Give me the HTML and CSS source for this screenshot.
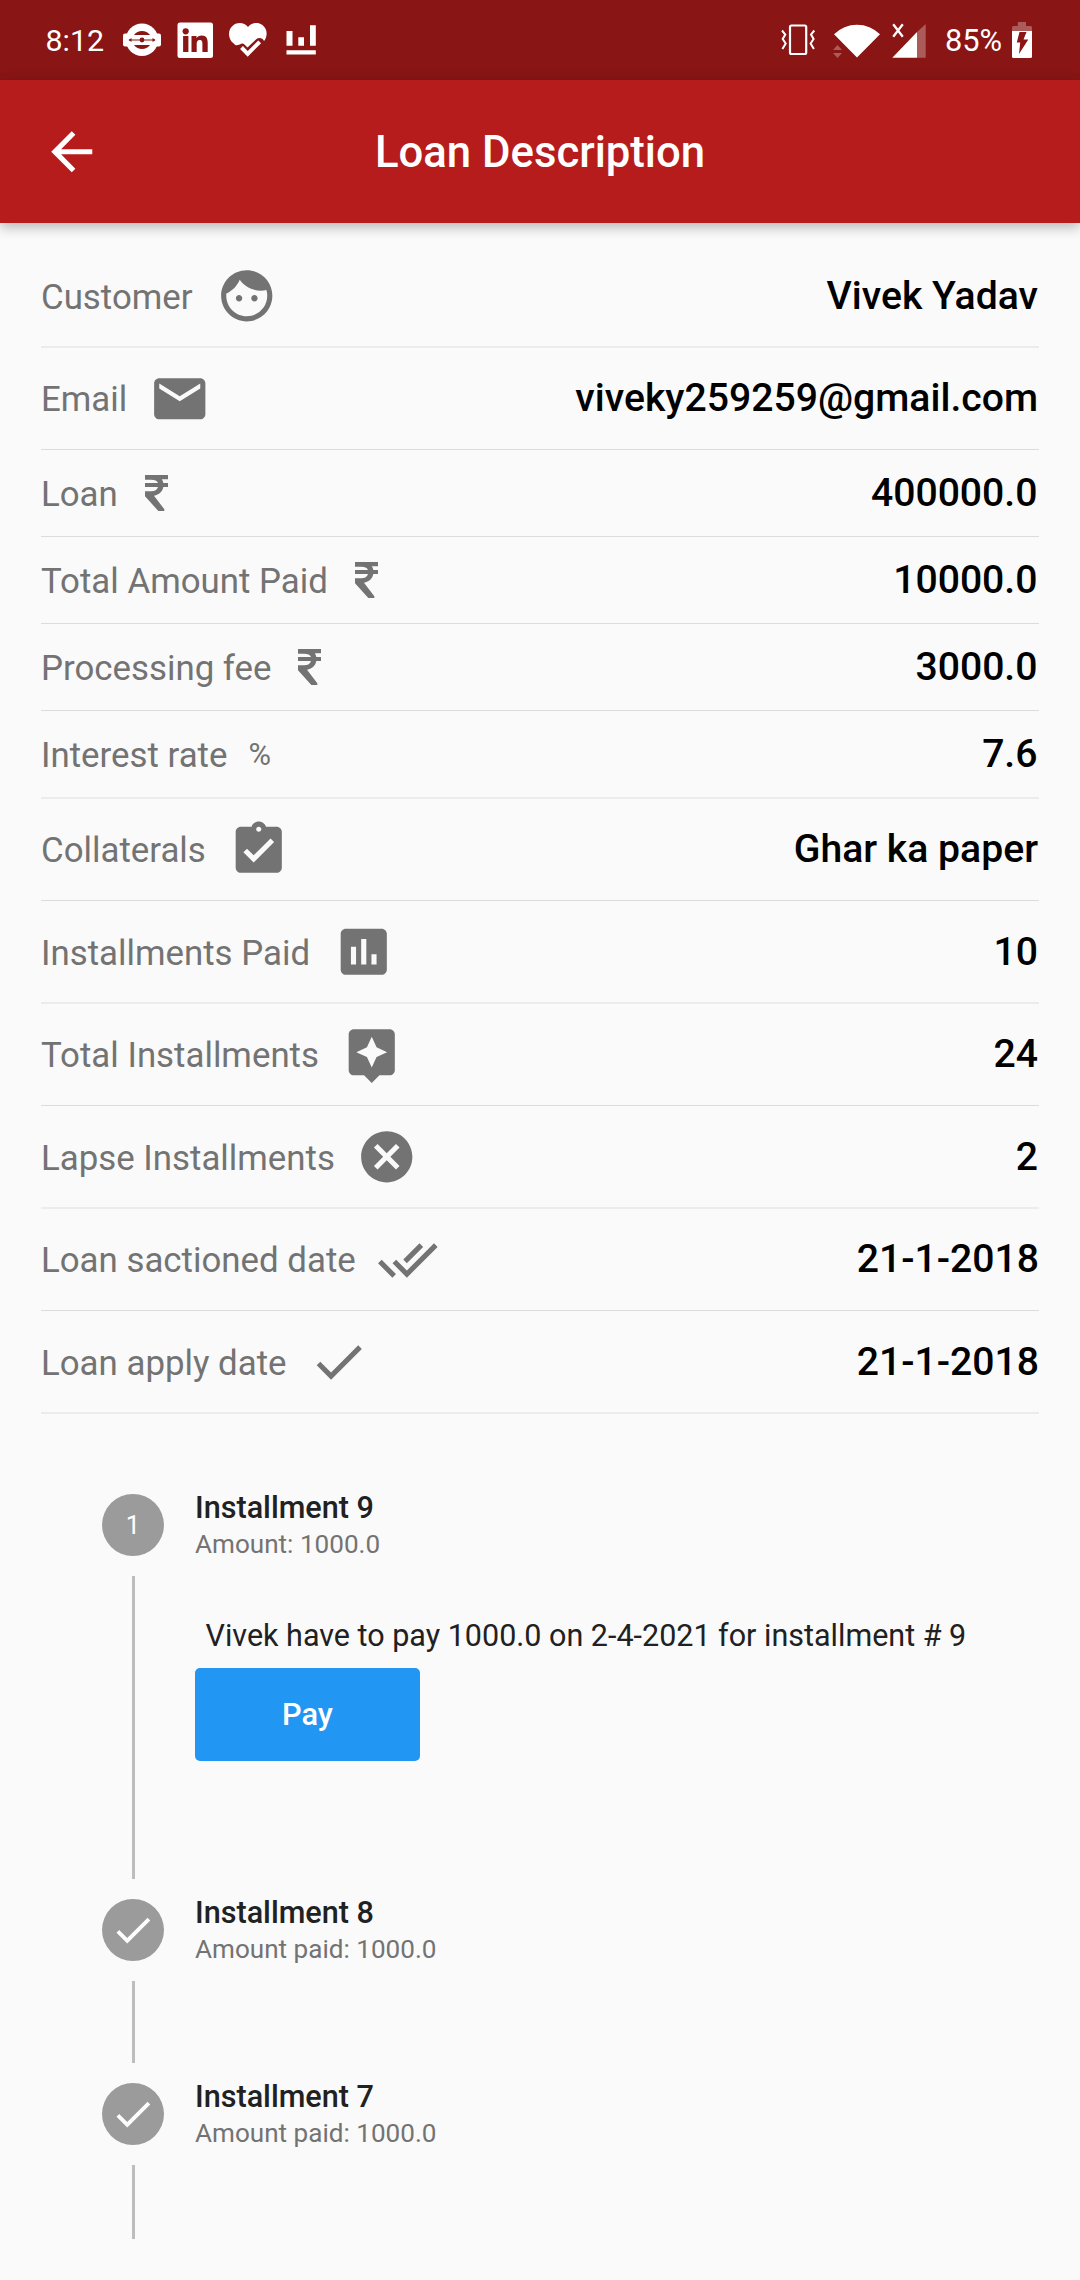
FILE: index.html
```html
<!DOCTYPE html>
<html lang="en">
<head>
<meta charset="utf-8">
<title>Loan Description</title>
<link rel="stylesheet" href="styles.css">
</head>
<body>
<div class="status">
  <span class="time">8:12</span>
  <svg class="s-train" width="38" height="80" viewBox="123 0 38 80"><circle cx="142" cy="39.7" r="16.2" fill="#fff"/><rect x="123" y="33.5" width="38" height="13" rx="2" fill="#fff"/><path d="M134 35a10 10 0 0 1 16 0zM134 45a10 10 0 0 0 16 0z" fill="#891515"/><path d="M129 40h26" stroke="#891515" stroke-width="1"/><circle cx="142" cy="40" r="2.4" fill="#891515"/><path d="M128.500 40l3-2v4zM155.500 40l-3-2v4z" fill="#891515"/></svg>
  <svg class="s-in" width="36" height="80" viewBox="177 0 36 80"><rect x="177.500" y="22.500" width="35.500" height="35.500" rx="2.500" fill="#fff"/><g fill="#891515"><circle cx="185.700" cy="31.300" r="3.100"/><rect x="183.100" y="36" width="5.300" height="16"/><path d="M191.500 36h5v2.200c1-1.600 2.800-2.600 5.200-2.600 4.700 0 6 3 6 7.500V52h-5.300v-8c0-2-.2-3.900-2.700-3.900-2.400 0-3 1.800-3 3.800V52h-5.200z"/></g></svg>
  <svg class="s-heart" width="38" height="80" viewBox="229 0 38 80"><path d="M248 27c-3.500-4.600-10.500-5.200-15-1.500-5 4-5 11-1.500 16L248 57l16-15.500c3.500-5 4-12-1.500-16.500-4.500-3.300-11-2.500-14.500 2z" fill="#fff"/><path d="M233 46l7-1.500a3 3 0 0 1 4.500 0l3 3 9-8.500c2.500-2 6.500-1 7.500 2l4-2v20h-35z" fill="#891515"/><path d="M241.500 47.500l6.200 6.300 12-12" fill="none" stroke="#fff" stroke-width="4"/></svg>
  <svg class="s-bars" width="30" height="80" viewBox="286 0 30 80"><path d="M286.500 31h6v14.700h-6zM298.300 37.300h5.700v8.400h-5.700zM310 25.300h5.800v20.400H310zM286.500 50.300h29.300v4.200h-29.300z" fill="#fff"/></svg>
  <div class="status-right">
    <svg class="s-vib" width="35" height="80" viewBox="781 0 35 80" fill="none" stroke="#fff"><rect x="790" y="25.500" width="16.200" height="28.500" rx="1.500" stroke-width="2.200"/><path d="M782 30.500l3.300 4-2.600 4.500 3 4.500-3.300 5.500M814.300 30.500l-3.300 4 2.600 4.500-3 4.500 3.300 5.500" stroke-width="2"/></svg>
    <svg class="s-wifi" width="48" height="80" viewBox="833 0 48 80"><path d="M834 34.300a32.500 32.500 0 0 1 46 0L857 57.500z" fill="#fff"/><path d="M833 50l4.500-5 4.500 5zM833 53h9l-4.500 5z" fill="#fff" opacity=".3"/></svg>
    <svg class="s-cell" width="35" height="80" viewBox="892 0 35 80"><path d="M892.300 57.700L917 32v25.700z" fill="#fff"/><path d="M917 32l8.700-8v33.700H917z" fill="#fff" opacity=".3"/><path d="M893.200 24.300l9.600 12.400M902.800 24.300l-9.600 12.400" stroke="#fff" stroke-width="2.300"/></svg>
    <span class="battery-text">85%</span>
    <svg class="s-bat" width="20" height="80" viewBox="1012 0 20 80"><path d="M1012 31v-3.500q0-1.500 1.500-1.500h4.300v-4h8.200v4h4.500q1.500 0 1.500 1.500V31z" fill="#fff" opacity=".3"/><path d="M1012 31h20v25.500q0 1.500-1.500 1.500h-17q-1.500 0-1.500-1.500z" fill="#fff"/><path d="M1019.500 32h7l-3 7.500h4.800l-9.300 14.500 1.200-11.500h-3.400z" fill="#891515"/></svg>
  </div>
</div>
<header class="appbar">
  <svg class="icon back" viewBox="0 0 24 24"><path d="M20 11H7.830l5.590-5.590L12 4l-8 8 8 8 1.410-1.410L7.830 13H20v-2z"/></svg>
  <h1>Loan Description</h1>
</header>
<main>
<section class="details">
  <div class="row soft"><span class="label wide">Customer</span><svg class="icon" viewBox="0 0 24 24"><path d="M9 11.750c-.69 0-1.250.56-1.250 1.250s.56 1.250 1.250 1.250 1.250-.56 1.250-1.250-.56-1.250-1.250-1.250zm6 0c-.69 0-1.250.56-1.250 1.250s.56 1.250 1.250 1.250 1.250-.56 1.250-1.250-.56-1.250-1.250-1.250zM12 2C6.480 2 2 6.480 2 12s4.480 10 10 10 10-4.480 10-10S17.520 2 12 2zm0 18c-4.410 0-8-3.590-8-8 0-.29.020-.58.050-.86 2.360-1.050 4.230-2.980 5.210-5.370C11.070 8.330 14.050 10 17.420 10c.78 0 1.530-.09 2.250-.26.21.71.33 1.470.33 2.260 0 4.410-3.590 8-8 8z"/></svg><span class="value">Vivek Yadav</span></div>
  <div class="row"><span class="label mid">Email</span><svg class="icon" viewBox="0 0 24 24"><path d="M20 4H4c-1.100 0-1.990.9-1.990 2L2 18c0 1.100.9 2 2 2h16c1.100 0 2-.9 2-2V6c0-1.100-.9-2-2-2zm0 4l-8 5-8-5V6l8 5 8-5v2z"/></svg><span class="value">viveky259259@gmail.com</span></div>
  <div class="row short"><span class="label">Loan</span><svg class="rupee" viewBox="15 27 69 108"><path d="M15 27H84V40H65C68 43 69 47 70 51H84V63H70C67 77 58 86 42 89L73 130V135H55L15 91V76H33C45 76 52 71 54 63H15V51H54C51 44 45 41 33 41H15Z"/></svg><span class="value">400000.0</span></div>
  <div class="row short"><span class="label">Total Amount Paid</span><svg class="rupee" viewBox="15 27 69 108"><path d="M15 27H84V40H65C68 43 69 47 70 51H84V63H70C67 77 58 86 42 89L73 130V135H55L15 91V76H33C45 76 52 71 54 63H15V51H54C51 44 45 41 33 41H15Z"/></svg><span class="value">10000.0</span></div>
  <div class="row short"><span class="label">Processing fee</span><svg class="rupee" viewBox="15 27 69 108"><path d="M15 27H84V40H65C68 43 69 47 70 51H84V63H70C67 77 58 86 42 89L73 130V135H55L15 91V76H33C45 76 52 71 54 63H15V51H54C51 44 45 41 33 41H15Z"/></svg><span class="value">3000.0</span></div>
  <div class="row short soft"><span class="label">Interest rate</span><span class="percent">%</span><span class="value">7.6</span></div>
  <div class="row"><span class="label mid">Collaterals</span><svg class="icon" viewBox="0 0 24 24"><path d="M19 3h-4.180C14.400 1.840 13.300 1 12 1c-1.300 0-2.400.84-2.820 2H5c-1.100 0-2 .9-2 2v14c0 1.100.9 2 2 2h14c1.100 0 2-.9 2-2V5c0-1.100-.9-2-2-2zm-7 0c.55 0 1 .45 1 1s-.45 1-1 1-1-.45-1-1 .45-1 1-1zm-2 14l-4-4 1.410-1.410L10 14.170l6.590-6.590L18 9l-8 8z"/></svg><span class="value">Ghar ka paper</span></div>
  <div class="row soft"><span class="label wide">Installments Paid</span><svg class="icon" viewBox="0 0 24 24"><path d="M19 3H5c-1.100 0-2 .9-2 2v14c0 1.100.9 2 2 2h14c1.100 0 2-.9 2-2V5c0-1.100-.9-2-2-2zM9 17H7v-7h2v7zm4 0h-2V7h2v10zm4 0h-2v-4h2v4z"/></svg><span class="value">10</span></div>
  <div class="row"><span class="label mid">Total Installments</span><svg class="icon" viewBox="0 0 24 24"><path d="M19 2H5c-1.100 0-2 .9-2 2v14c0 1.100.9 2 2 2h4l3 3 3-3h4c1.100 0 2-.9 2-2V4c0-1.100-.9-2-2-2zm-5.120 10.880L12 17l-1.880-4.120L6 11l4.120-1.880L12 5l1.880 4.120L18 11l-4.120 1.880z"/></svg><span class="value">24</span></div>
  <div class="row soft"><span class="label">Lapse Installments</span><svg class="icon" viewBox="0 0 24 24"><path d="M12 2C6.470 2 2 6.470 2 12s4.470 10 10 10 10-4.470 10-10S17.530 2 12 2zm5 13.590L15.590 17 12 13.410 8.410 17 7 15.590 10.590 12 7 8.410 8.410 7 12 10.590 15.590 7 17 8.410 13.410 12 17 15.590z"/></svg><span class="value">2</span></div>
  <div class="row"><span class="label">Loan sactioned date</span><svg class="icon" viewBox="0 0 24 24"><path d="M18 7l-1.410-1.410-6.340 6.340 1.410 1.410L18 7zm4.240-1.410L11.660 16.170 7.480 12l-1.410 1.410L11.660 19l12-12-1.420-1.410zM.41 13.410L6 19l1.410-1.410L1.830 12 .41 13.410z"/></svg><span class="value date">21-1-2018</span></div>
  <div class="row soft"><span class="label">Loan apply date</span><svg class="icon" viewBox="0 0 24 24"><path d="M9 16.200L4.800 12l-1.400 1.400L9 19 21 7l-1.400-1.400L9 16.200z"/></svg><span class="value date">21-1-2018</span></div>
</section>
<section class="stepper">
  <div class="step current">
    <div class="dot">1</div>
    <div class="heading"><b>Installment 9</b><span>Amount: 1000.0</span></div>
    <div class="rail"></div>
    <div class="content"><p>Vivek have to pay 1000.0 on 2-4-2021 for installment # 9</p><button type="button">Pay</button></div>
  </div>
  <div class="step">
    <div class="dot"><svg viewBox="0 0 24 24"><path d="M9 16.200L4.800 12l-1.400 1.400L9 19 21 7l-1.400-1.400L9 16.200z"/></svg></div>
    <div class="heading"><b>Installment 8</b><span>Amount paid: 1000.0</span></div>
    <div class="rail"></div>
  </div>
  <div class="step last">
    <div class="dot"><svg viewBox="0 0 24 24"><path d="M9 16.200L4.800 12l-1.400 1.400L9 19 21 7l-1.400-1.400L9 16.200z"/></svg></div>
    <div class="heading"><b>Installment 7</b><span>Amount paid: 1000.0</span></div>
    <div class="rail"></div>
  </div>
</section>
</main>
</body>
</html>
```
FILE: styles.css
```css
* { box-sizing: border-box; }
body { margin: 0; width: 1080px; height: 2280px; overflow: hidden; background: #fafafa; color: #212121; font-family: Roboto, "Noto Sans", sans-serif; }
svg { display: block; flex: none; }

/* System status bar */
.status { height: 80px; display: flex; align-items: center; padding: 0 48px 0 45.5px; background: #891515; color: #fff; font-size: 30.4px; line-height: 36px; }
.time { width: 77.5px; padding-top: 1px; }
.s-in { margin-left: 16px; }
.s-heart { margin-left: 16px; }
.s-bars { margin-left: 19px; }
.status-right { display: flex; align-items: center; margin-left: auto; }
.s-wifi { margin-left: 17px; }
.s-cell { margin-left: 11px; }
.battery-text { width: 85px; padding: 2px 0 0 18px; font-size: 30.8px; }

/* App bar */
.appbar { position: relative; height: 143px; display: grid; grid-template-columns: 62px 1fr 62px; align-items: center; padding: 0 41px; background: #b71c1c; color: #fff; box-shadow: 0 4px 12px rgba(0, 0, 0, .28); }
.appbar h1 { margin: 0; text-align: center; font-size: 43.7px; line-height: 52px; font-weight: 500; }
.icon { width: 61.5px; height: 61.5px; fill: #737373; }
.appbar .back { fill: #fff; }

/* Loan details */
.details { padding: 22px 41px 0; }
.row { display: flex; align-items: center; height: 102px; border-bottom: 1px solid #dcdcdc; }
.row.short { height: 87px; }
.row.soft { height: 103px; border-bottom: 2px solid #ececec; }
.row.short.soft { height: 88px; }
.label { margin-right: 21px; padding-top: 3px; font-size: 34.85px; line-height: 41px; color: #737373; white-space: nowrap; }
.label.mid { margin-right: 22px; }
.label.wide { margin-right: 23px; }
.rupee { width: 23px; height: 36px; margin-left: 6px; fill: #737373; }
.percent { font-size: 30.76px; line-height: 37px; color: #737373; }
.value { margin-left: auto; padding-right: 1px; font-size: 39.15px; line-height: 46px; font-weight: 500; color: #000; }
.value.date { padding-right: 0; }
.row.short .value { padding-right: 1.5px; }
.row:not(.soft):not(.short) .label { padding-top: 1px; }
.row:not(.soft):not(.short) .value { padding-bottom: 2px; }

/* Installment stepper */
.stepper { padding: 80px 102px 0; }
.step { display: grid; grid-template: 62px 1fr / 62px 1fr; column-gap: 31px; height: 184px; }
.step.current { height: 405px; }
.step.last { height: 176px; }
.dot { display: flex; align-items: center; justify-content: center; border-radius: 50%; background: #9b9b9b; color: #fff; font-size: 25.6px; line-height: 30px; }
.dot svg { width: 46px; height: 46px; fill: #fff; }
.heading { display: flex; flex-direction: column; justify-content: center; padding-top: 2px; line-height: 36px; }
.heading b { font-size: 30.6px; font-weight: 500; }
.heading span { padding-top: 1px; font-size: 26.1px; line-height: 35px; color: #737373; }
.rail { width: 3px; margin: 20px auto; background: #bdbdbd; }
.content { padding-top: 62px; }
.content p { margin: 0 0 14px 10.5px; font-size: 30.5px; line-height: 36px; white-space: nowrap; }
.content button { display: block; width: 225px; height: 93px; padding: 0; border: 0; border-radius: 5px; background: #2196f3; color: #fff; font: 500 30.76px/36px Roboto, sans-serif; }
```
